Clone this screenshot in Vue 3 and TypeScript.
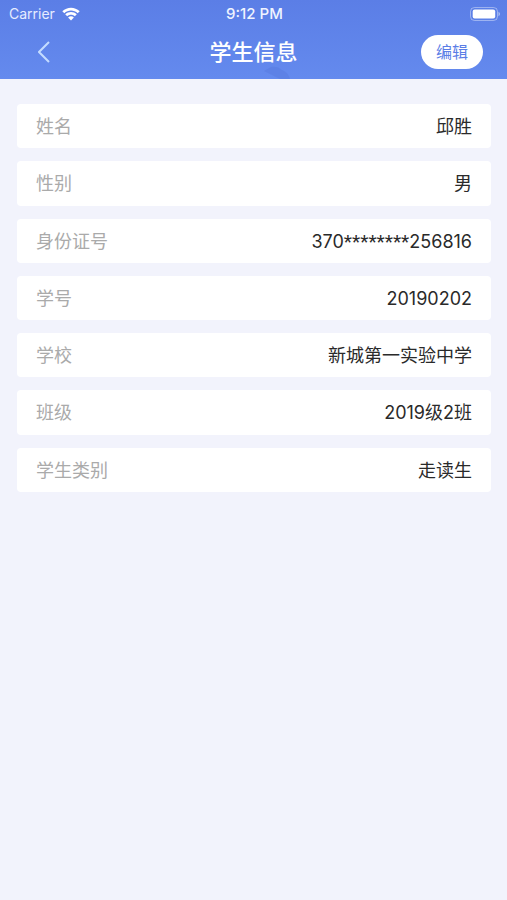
<script setup lang="ts">
interface InfoRow {
  label: string
  value: string
}

const rows: InfoRow[] = [
  { label: '姓名', value: '邱胜' },
  { label: '性别', value: '男' },
  { label: '身份证号', value: '370********256816' },
  { label: '学号', value: '20190202' },
  { label: '学校', value: '新城第一实验中学' },
  { label: '班级', value: '2019级2班' },
  { label: '学生类别', value: '走读生' },
]

// Splits a value into plain runs and masked runs of asterisks.
const split = (value: string): string[] => value.split(/(\*+)/).filter(Boolean)
</script>

<template>
  <div class="screen">
    <header class="top">
      <svg class="decor" viewBox="0 0 28 13" aria-hidden="true">
        <path d="M0 5L7 1C11-0 15 1 18 4C23 6 25 9 26 13H16Z" />
      </svg>
      <div class="status">
        <div class="carrier">
          <span>Carrier</span>
          <svg class="wifi" viewBox="0 0 18 14" aria-hidden="true">
            <path d="M0.3 4.3C5.2-0.6 12.8-0.6 17.7 4.3L15.7 6.3C12 2.7 6 2.7 2.3 6.3Z" />
            <path d="M3.2 7.3C6.5 4.2 11.5 4.2 14.8 7.3L12.8 9.3C10.7 7.3 7.3 7.3 5.2 9.3Z" />
            <path d="M6.1 10.4C7.8 8.9 10.2 8.9 11.9 10.4L9 13.4Z" />
          </svg>
        </div>
        <span class="time">9:12 PM</span>
        <svg class="battery" viewBox="0 0 30 14" aria-hidden="true">
          <rect class="shell" x="0.5" y="0.5" width="27" height="13" rx="4" />
          <rect x="2.7" y="2.5" width="22.5" height="9" rx="2" />
          <path d="M28.5 4.8C30.4 5.6 30.4 8.4 28.5 9.2Z" opacity="0.5" />
        </svg>
      </div>
      <nav class="bar">
        <button class="back" type="button" aria-label="返回">
          <svg viewBox="0 0 12 22" aria-hidden="true"><path d="M11 1L1 11L11 21" /></svg>
        </button>
        <h1>学生信息</h1>
        <button class="edit" type="button">编辑</button>
      </nav>
    </header>
    <dl class="list">
      <div v-for="row in rows" :key="row.label" class="row">
        <dt>{{ row.label }}</dt>
        <dd>
          <span v-for="(part, i) in split(row.value)" :key="i" :class="{ mask: part.startsWith('*') }">{{ part }}</span>
        </dd>
      </div>
    </dl>
  </div>
</template>

<style>
body {
  background: #f2f3fc;
}
</style>

<style scoped>
.screen {
  min-height: 100vh;
  background: #f2f3fc;
  font-family: Inter, "Noto Sans CJK SC", sans-serif;
}
.top {
  position: relative;
  height: 79px;
  color: #fff;
  background: linear-gradient(#5b7ee6, #648aee);
}
.decor {
  position: absolute;
  bottom: 0;
  left: 52%;
  width: 28px;
  height: 13px;
  fill: #587be0;
  opacity: 0.5;
}
.status {
  display: grid;
  grid-template-columns: 1fr auto 1fr;
  align-items: center;
  height: 27px;
  padding: 0 7px 0 9px;
  font-size: 14px;
}
.carrier {
  display: flex;
  align-items: center;
  gap: 7px;
  color: #e6ecff;
}
.wifi {
  width: 18px;
  height: 14px;
  fill: #fff;
}
.time {
  color: #f0f4ff;
  font-size: 15px;
  font-weight: 500;
}
.battery {
  justify-self: end;
  width: 30px;
  height: 14px;
  fill: #fff;
}
.shell {
  fill: none;
  stroke: #fff;
  stroke-opacity: 0.4;
}
.bar {
  display: grid;
  grid-template-columns: 1fr auto 1fr;
  align-items: center;
  height: 50px;
  padding: 0 24px;
}
button {
  padding: 0;
  border: 0;
  font-family: inherit;
  cursor: pointer;
}
.back {
  display: flex;
  align-items: center;
  justify-content: center;
  width: 40px;
  height: 40px;
  background: none;
}
.back svg {
  width: 12px;
  height: 22px;
  fill: none;
  stroke: #c4dcff;
  stroke-width: 2;
}
h1 {
  position: relative;
  margin: 0;
  font-size: 22px;
  font-weight: 500;
  line-height: 32px;
}
.edit {
  justify-self: end;
  width: 62px;
  height: 34px;
  padding-bottom: 2px;
  border-radius: 17px;
  color: #5b7ee6;
  background: #fff;
  font-size: 16px;
}
.list {
  display: grid;
  grid-auto-rows: 1fr;
  gap: 13px;
  min-height: 388px;
  margin: 0;
  padding: 25px 16px 25px 17px;
}
.row {
  display: flex;
  align-items: baseline;
  justify-content: space-between;
  padding: 10px 19px 8px;
  border-radius: 4px;
  background: #fff;
  font-size: 18px;
  line-height: 26px;
}
dt {
  color: #aaa;
}
dd {
  display: flex;
  align-items: baseline;
  margin: 0;
  color: #2a2a2a;
}
.mask {
  font-family: Roboto, sans-serif;
  font-size: 19px;
}
</style>
